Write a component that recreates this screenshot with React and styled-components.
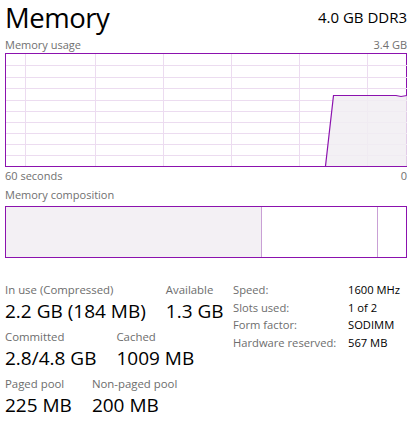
import React from "react";
import styled, { createGlobalStyle } from "styled-components";

const GlobalStyle = createGlobalStyle`
  html, body {
    margin: 0;
    padding: 0;
    background: #ffffff;
  }
  body {
    font-family: "Open Sans", "Liberation Sans", sans-serif;
    color: #000000;
  }
`;

const PURPLE = "#8b12ae";

const Pagina = styled.div`
  width: 418px;
  height: 448px;
  box-sizing: border-box;
  padding: 0 11px 0 5px;
  overflow: hidden;
`;

const Cabecalho = styled.div`
  display: flex;
  justify-content: space-between;
  align-items: flex-start;
  height: 35px;
`;

const Titulo = styled.h1`
  margin: 0;
  font-weight: 400;
  font-size: 27.5px;
  line-height: 35px;
  letter-spacing: -0.5px;
`;

const Subtitulo = styled.span`
  align-self: flex-end;
  font-size: 15px;
  line-height: 20px;
  margin-bottom: 8px;
`;

const Legenda = styled.div`
  display: flex;
  justify-content: space-between;
  font-size: 11px;
  line-height: 14px;
  color: #707070;
  height: ${(p) => p.$h || 14}px;
  align-items: ${(p) => (p.$fim ? "flex-end" : "center")};
`;

const Grafico = styled.div`
  height: 114px;
  border: 1px solid ${PURPLE};
  box-sizing: border-box;
  margin-top: 1px;
`;

const Composicao = styled.div`
  height: 52px;
  border: 1px solid ${PURPLE};
  box-sizing: border-box;
  display: flex;
  margin-top: 4px;
`;

const Segmento = styled.div`
  width: ${(p) => p.$w}px;
  flex: ${(p) => (p.$w ? "none" : "1")};
  background: ${(p) => p.$cor || "transparent"};
  border-right: ${(p) => (p.$divisor ? "1px solid #c9a0d5" : "none")};
`;

const Estatisticas = styled.div`
  display: flex;
  margin-top: 23px;
`;

const ColunaEsquerda = styled.div`
  width: 228px;
  display: flex;
  flex-direction: column;
  gap: 4px;
`;

const Par = styled.div`
  display: flex;
  gap: 20px;
`;

const Item = styled.div`
  display: flex;
  flex-direction: column;
`;

const Rotulo = styled.span`
  font-size: 11.4px;
  line-height: 17px;
  color: #6d6d6d;
  white-space: nowrap;
`;

const Valor = styled.span`
  font-size: 19px;
  line-height: 26px;
  white-space: nowrap;
`;

const Tabela = styled.div`
  display: grid;
  grid-template-columns: 115px auto;
  grid-auto-rows: 17.7px;
  font-size: 11.2px;
  line-height: 17.7px;
`;

const Celula = styled.span`
  color: ${(p) => (p.$cinza ? "#6d6d6d" : "#000000")};
  white-space: nowrap;
`;

const GraficoUso = () => {
  const w = 401;
  const h = 112;
  const verticais = [19, 89, 157, 225, 293, 361];
  const horizontais = [11.3, 22.5, 33.8, 45.5, 56.5, 67.5, 79, 90.3, 101.3];
  const linha = "319.5,112 327.5,41.5 390,41.5 395,42.5 401,41.5";
  return (
    <svg width={w} height={h} viewBox={`0 0 ${w} ${h}`} style={{ display: "block" }}>
      {verticais.map((x) => (
        <line key={`v${x}`} x1={x + 0.5} y1={0} x2={x + 0.5} y2={h} stroke="#ecdcf0" strokeWidth="1" />
      ))}
      {horizontais.map((y) => (
        <line key={`h${y}`} x1={0} y1={Math.round(y) + 0.5} x2={w} y2={Math.round(y) + 0.5} stroke="#ecdcf0" strokeWidth="1" />
      ))}
      <polygon points={`${linha} 401,112`} fill="#f1edf2" fillOpacity="0.85" />
      <polyline points={linha} fill="none" stroke={PURPLE} strokeWidth="1.2" />
    </svg>
  );
};

const App = () => {
  return (
    <>
      <GlobalStyle />
      <Pagina>
        <Cabecalho>
          <Titulo>Memory</Titulo>
          <Subtitulo>4.0 GB DDR3</Subtitulo>
        </Cabecalho>

        <Legenda $h={17} $fim>
          <span>Memory usage</span>
          <span>3.4 GB</span>
        </Legenda>
        <Grafico>
          <GraficoUso />
        </Grafico>
        <Legenda $h={18}>
          <span>60 seconds</span>
          <span>0</span>
        </Legenda>

        <Legenda $h={17} $fim>
          <span>Memory composition</span>
        </Legenda>
        <Composicao>
          <Segmento $w={255} $cor="#f3f0f4" $divisor />
          <Segmento $w={115} $divisor />
          <Segmento />
        </Composicao>

        <Estatisticas>
          <ColunaEsquerda>
            <Par>
              <Item>
                <Rotulo>In use (Compressed)</Rotulo>
                <Valor>2.2 GB (184 MB)</Valor>
              </Item>
              <Item>
                <Rotulo>Available</Rotulo>
                <Valor>1.3 GB</Valor>
              </Item>
            </Par>
            <Par>
              <Item>
                <Rotulo>Committed</Rotulo>
                <Valor>2.8/4.8 GB</Valor>
              </Item>
              <Item>
                <Rotulo>Cached</Rotulo>
                <Valor>1009 MB</Valor>
              </Item>
            </Par>
            <Par>
              <Item>
                <Rotulo>Paged pool</Rotulo>
                <Valor>225 MB</Valor>
              </Item>
              <Item>
                <Rotulo>Non-paged pool</Rotulo>
                <Valor>200 MB</Valor>
              </Item>
            </Par>
          </ColunaEsquerda>

          <Tabela>
            <Celula $cinza>Speed:</Celula>
            <Celula>1600 MHz</Celula>
            <Celula $cinza>Slots used:</Celula>
            <Celula>1 of 2</Celula>
            <Celula $cinza>Form factor:</Celula>
            <Celula>SODIMM</Celula>
            <Celula $cinza>Hardware reserved:</Celula>
            <Celula>567 MB</Celula>
          </Tabela>
        </Estatisticas>
      </Pagina>
    </>
  );
};

export default App;
